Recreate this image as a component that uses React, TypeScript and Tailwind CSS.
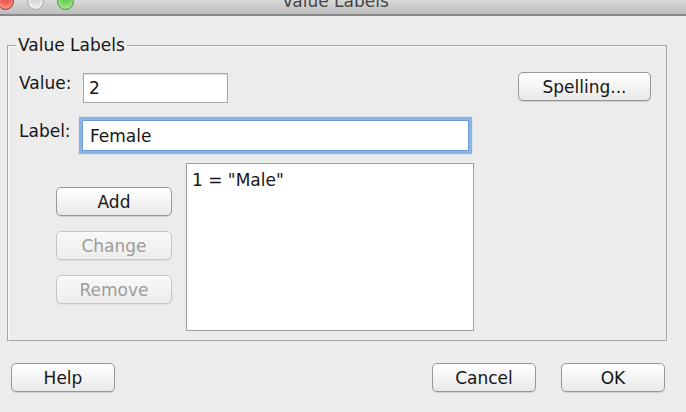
import React from 'react';

const font = { fontFamily: '"DejaVu Sans", "Liberation Sans", sans-serif' };

function MacButton({
  label,
  width,
  disabled = false,
}: {
  label: string;
  width: string;
  disabled?: boolean;
}) {
  return (
    <button
      disabled={disabled}
      className={
        disabled
          ? `${width} flex h-[29px] items-center justify-center rounded-[5px] border border-[#c6c6c6] bg-gradient-to-b from-[#f9f9f9] to-[#ececec] text-[17px] leading-[20px] text-[#9c9c9c] shadow-[0_1px_0_rgba(0,0,0,0.05)]`
          : `${width} flex h-[29px] items-center justify-center rounded-[5px] border border-[#979797] bg-gradient-to-b from-white to-[#e9e9e9] text-[17px] leading-[20px] text-[#161616] shadow-[0_1px_0_rgba(0,0,0,0.12)]`
      }
    >
      {label}
    </button>
  );
}

export default function App() {
  return (
    <div
      className="flex h-[412px] w-[686px] flex-col overflow-hidden bg-[#ececec] text-[#161616]"
      style={font}
    >
      {/* window title bar, clipped at the top like the capture */}
      <div className="flex h-[16px] shrink-0 items-start overflow-hidden border-b-2 border-[#8a8a8a] bg-gradient-to-b from-[#d8d8d8] to-[#bebebe]">
        <div className="ml-[-3px] mt-[-7px] flex gap-[13px]">
          <span className="h-[17px] w-[17px] rounded-full border border-[#b53a33] bg-[#ec5b53] shadow-[inset_0_-3px_4px_rgba(255,190,180,0.6)]"></span>
          <span className="h-[17px] w-[17px] rounded-full border border-[#a3a3a3] bg-[#d9d9d9] shadow-[inset_0_-3px_4px_rgba(255,255,255,0.7)]"></span>
          <span className="h-[17px] w-[17px] rounded-full border border-[#4f9a3c] bg-[#6fcb57] shadow-[inset_0_-3px_4px_rgba(210,255,190,0.6)]"></span>
        </div>
        <span className="ml-[208px] mt-[-9px] text-[17px] leading-[20px] text-[#474747]">
          Value Labels
        </span>
      </div>

      {/* group box */}
      <fieldset className="ml-[7px] mt-[20px] h-[305px] w-[660px] shrink-0 border border-[#a9a9a9] shadow-[inset_1px_1px_0_#fafafa]">
        <legend className="ml-[8px] px-[2px] text-[17px] leading-[18px]">
          Value Labels
        </legend>

        <div className="flex flex-col pt-[18px]">
          {/* value row */}
          <div className="flex items-start pl-[11px] pr-[15px]">
            <span className="mt-[1px] w-[64px] text-[17px] leading-[20px]">
              Value:
            </span>
            <div className="mt-[1px] flex h-[30px] w-[145px] items-center border border-[#a8a8a8] bg-white pl-[5px] text-[17px] leading-[20px] shadow-[inset_0_1px_1px_rgba(0,0,0,0.12)]">
              2
            </div>
            <div className="ml-auto">
              <MacButton label="Spelling..." width="w-[133px]" />
            </div>
          </div>

          {/* label row */}
          <div className="mt-[17px] flex items-start pl-[11px]">
            <span className="mt-[1px] w-[63px] text-[17px] leading-[20px]">
              Label:
            </span>
            <div className="flex h-[31px] w-[387px] items-center border border-[#6d9cd6] bg-white pl-[7px] text-[17px] leading-[20px] shadow-[0_0_1px_3px_#8cb3e4]">
              Female
            </div>
          </div>

          {/* buttons + list */}
          <div className="mt-[12px] flex items-start pl-[48px]">
            <div className="mt-[24px] flex flex-col gap-[15px]">
              <MacButton label="Add" width="w-[116px]" />
              <MacButton label="Change" width="w-[116px]" disabled />
              <MacButton label="Remove" width="w-[116px]" disabled />
            </div>
            <div className="ml-[14px] h-[168px] w-[288px] border border-[#9f9f9f] bg-white pl-[5px] pt-[6px] text-[17px] leading-[20px]">
              1 = "Male"
            </div>
          </div>
        </div>
      </fieldset>

      {/* footer buttons */}
      <div className="mt-[22px] flex items-start pl-[11px] pr-[21px]">
        <MacButton label="Help" width="w-[104px]" />
        <div className="ml-auto flex gap-[25px]">
          <MacButton label="Cancel" width="w-[104px]" />
          <MacButton label="OK" width="w-[104px]" />
        </div>
      </div>
    </div>
  );
}
